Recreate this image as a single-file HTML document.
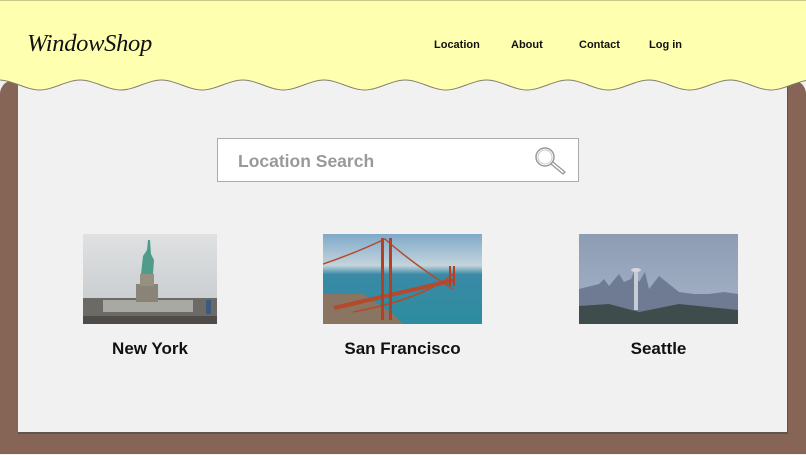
<!DOCTYPE html>
<html><head><meta charset="utf-8"><style>
*{margin:0;padding:0;box-sizing:border-box}
body{width:806px;height:455px;overflow:hidden;background:#f0f0f0;font-family:"Liberation Sans",sans-serif;position:relative}
.brown{position:absolute;background:#866556}
.panel{position:absolute;left:18px;top:70px;width:770px;height:364px;background:#f1f1f1;border-right:1px solid #555;border-bottom:2px solid #5f5550}
.nav{position:absolute;top:39px;font-size:11px;font-weight:bold;color:#111}
.logo{position:absolute;left:27px;top:30px;font-family:"Liberation Serif",serif;font-style:italic;font-size:24.5px;color:#111;letter-spacing:-0.3px}
.search{position:absolute;left:217px;top:138px;width:362px;height:44px;background:#fff;border:1px solid #aaa}
.search span{position:absolute;left:20px;top:12px;font-size:17.5px;font-weight:bold;color:#999}
.lbl{position:absolute;top:339px;font-size:17px;font-weight:bold;color:#111;text-align:center}
svg.img{position:absolute;top:234px}
</style></head><body>
<div class="brown" style="left:0;top:80px;width:806px;height:374px;border-radius:14px 14px 0 0"></div>
<div class="panel"></div>
<svg style="position:absolute;left:0;top:0" width="806" height="100">
<path d="M-1,0 H812 V80 L811.5,80 C798,80 784.4,90 770.9,90 C757.4,90 743.8,80 730.3,80 C716.8,80 703.1,90 689.6,90 C676.1,90 662.5,80 649,80 C635.5,80 621.9,90 608.4,90 C594.9,90 581.3,80 567.8,80 C554.3,80 540.6,90 527.1,90 C513.6,90 500,80 486.5,80 C473,80 459.4,90 445.9,90 C432.4,90 418.8,80 405.3,80 C391.8,80 378.1,90 364.6,90 C351.1,90 337.5,80 324,80 C310.5,80 296.9,90 283.4,90 C269.9,90 256.3,80 242.8,80 C229.3,80 215.6,90 202.1,90 C188.6,90 175,80 161.5,80 C148,80 134.4,90 120.9,90 C107.4,90 93.8,80 80.3,80 C66.8,80 53.1,90 39.6,90 C26.1,90 12.5,80 -1,80 Z" fill="#ffffb0" stroke="#827f6a" stroke-width="1"/>
<line x1="0" y1="0.5" x2="806" y2="0.5" stroke="#c8c88a"/>
</svg>
<div class="logo">WindowShop</div>
<div class="nav" style="left:434px">Location</div>
<div class="nav" style="left:511px">About</div>
<div class="nav" style="left:579px">Contact</div>
<div class="nav" style="left:649px">Log in</div>
<div class="search"><span>Location Search</span>
<svg style="position:absolute;left:314px;top:6px" width="36" height="32"><circle cx="13" cy="12" r="9" fill="none" stroke="#999" stroke-width="1.5"/><circle cx="13" cy="12" r="7" fill="none" stroke="#ccc" stroke-width="1"/><path d="M19,19 L31,29 L33,27 L21,17" fill="none" stroke="#999" stroke-width="1.3"/></svg>
</div>
<svg class="img" style="left:83px" width="134" height="90">
<defs><linearGradient id="g1" x1="0" y1="0" x2="0" y2="1"><stop offset="0" stop-color="#dfe1e2"/><stop offset="1" stop-color="#c4c8cb"/></linearGradient></defs>
<rect width="134" height="90" fill="url(#g1)"/>
<rect x="0" y="64" width="134" height="20" fill="#6c6a66"/>
<rect x="20" y="66" width="90" height="12" fill="#a9a9a4"/>
<rect x="53" y="50" width="22" height="18" fill="#8a8378"/>
<rect x="57" y="40" width="14" height="12" fill="#978f82"/>
<path d="M58,40 L60,22 L64,16 L65,6 L67,6 L68,20 L71,26 L70,40Z" fill="#4f9c8b"/>
<rect x="123" y="66" width="5" height="14" fill="#3d5a7c"/>
<rect x="0" y="82" width="134" height="8" fill="#4e4b48"/>
</svg>
<svg class="img" style="left:323px" width="159" height="90">
<defs><linearGradient id="g2" x1="0" y1="0" x2="0" y2="1"><stop offset="0" stop-color="#7fa9c9"/><stop offset="0.35" stop-color="#c4d4dc"/><stop offset="0.45" stop-color="#3a8aa6"/><stop offset="1" stop-color="#2d8c9e"/></linearGradient></defs>
<rect width="159" height="90" fill="url(#g2)"/>
<path d="M0,60 L40,60 L70,80 L80,90 L0,90Z" fill="#8a7562"/>
<path d="M0,30 Q30,20 62,5 Q90,30 130,55 M130,40 Q100,65 30,78" fill="none" stroke="#b44a2d" stroke-width="1.5"/>
<path d="M10,72 L132,44 L132,48 L12,76Z" fill="#b44a2d"/>
<rect x="58" y="4" width="3" height="82" fill="#b33f25"/><rect x="66" y="4" width="3" height="82" fill="#b33f25"/>
<rect x="126" y="32" width="2" height="20" fill="#b33f25"/><rect x="130" y="32" width="2" height="20" fill="#b33f25"/>
</svg>
<svg class="img" style="left:579px" width="159" height="90">
<defs><linearGradient id="g3" x1="0" y1="0" x2="0" y2="1"><stop offset="0" stop-color="#8e9cb3"/><stop offset="1" stop-color="#a7b5cb"/></linearGradient></defs>
<rect width="159" height="90" fill="url(#g3)"/>
<path d="M0,55 L20,50 L25,45 L30,52 L40,40 L45,48 L52,45 L55,38 L60,48 L66,38 L70,55 L80,42 L90,50 L100,58 L115,60 L130,60 L145,58 L159,60 L159,90 L0,90Z" fill="#6f7a93"/>
<rect x="55" y="36" width="4" height="40" fill="#c7cbd3"/><ellipse cx="57" cy="36" rx="5" ry="2" fill="#d5d7dc"/>
<path d="M0,72 L30,70 L60,78 L100,70 L159,76 L159,90 L0,90Z" fill="#3f4c4c"/>
</svg>
<div class="lbl" style="left:83px;width:134px">New York</div>
<div class="lbl" style="left:323px;width:159px">San Francisco</div>
<div class="lbl" style="left:579px;width:159px">Seattle</div>
</body></html>
